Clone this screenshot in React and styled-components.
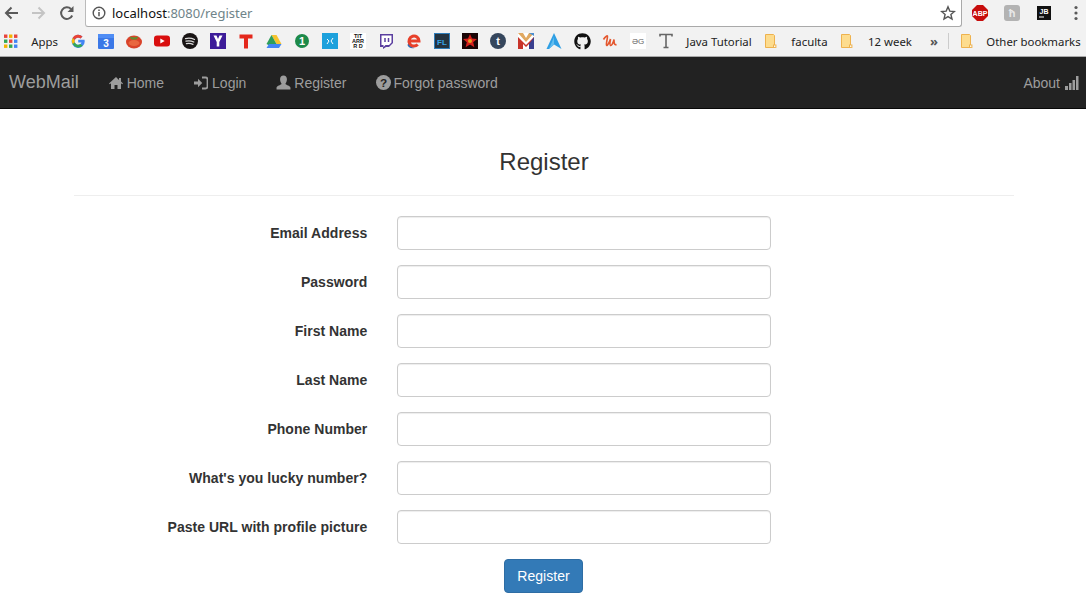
import React from 'react';
import styled, { createGlobalStyle } from 'styled-components';
import { FaGithub } from 'react-icons/fa';

const GlobalStyle = createGlobalStyle`
  html, body {
    margin: 0;
    height: 100%;
    overflow: hidden;
    background: #fff;
    font-family: "Liberation Sans", Arial, sans-serif;
    font-size: 14px;
    color: #333;
  }
  * { box-sizing: border-box; }
`;

const Chrome = styled.div`
  height: 57px;
  background: #f2f2f2;
  border-bottom: 1px solid #a9a9a9;
`;

const TopRow = styled.div`
  height: 27px;
  display: flex;
`;

const NavButtons = styled.div`
  width: 85px;
  flex: none;
  display: flex;
  gap: 6px;
`;

const ToolButton = styled.div`
  width: ${p => p.$w || 22}px;
  height: 26px;
  flex: none;
  display: flex;
  align-items: center;
  justify-content: center;
`;

const UrlBox = styled.div`
  width: 877px;
  height: 27px;
  flex: none;
  background: #fff;
  border: 1px solid #a9a9a9;
  border-top: 0;
  border-left-color: #bbb;
  border-radius: 0 0 3px 3px;
  display: flex;
  align-items: center;
  padding: 0 5px 1px 6px;
`;

const Url = styled.div`
  flex: 1;
  margin-left: 6px;
  font: 13px "Noto Sans", sans-serif;
  color: #111;
  span { color: #6f8489; }
`;

const Extensions = styled.div`
  flex: 1;
  display: flex;
  gap: 16px;
  padding-left: 10px;
`;

const BookmarkRow = styled.div`
  height: 29px;
  display: flex;
  align-items: center;
  padding: 0 0 1px 3px;
`;

const Bookmark = styled.div`
  width: ${p => p.$w}px;
  flex: none;
  display: flex;
  align-items: center;
  justify-content: center;
  padding-left: ${p => p.$pad || 0}px;
  font: 11.4px "Noto Sans", sans-serif;
  color: #222;
  white-space: nowrap;
`;

const More = styled(Bookmark)`
  color: #555;
  font-size: 13px;
  font-weight: 700;
`;

const Divider = styled.div`
  width: 1px;
  height: 16px;
  background: #ccc;
  flex: none;
  margin: 0 8px 0 1px;
`;

const Navbar = styled.nav`
  height: 52px;
  background: #222;
  border-bottom: 1px solid #080808;
  display: flex;
  align-items: center;
  padding: 0 7px 0 9px;
  color: #9d9d9d;
`;

const Brand = styled.a`
  font-size: 18px;
  margin-right: 30px;
`;

const NavLinks = styled.div`
  flex: 1;
  display: flex;
  gap: 30px;
`;

const NavLink = styled.a`
  display: flex;
  align-items: center;
  gap: ${p => p.$gap}px;
  white-space: nowrap;
`;

const Container = styled.main`
  width: 970px;
  margin-left: 59px;
  padding: 0 15px;
`;

const Header = styled.header`
  height: 87px;
  border-bottom: 1px solid #eee;
  margin-bottom: 20px;
  padding-top: 39px;
  text-align: center;
  font-size: 24px;
  line-height: 27px;
`;

const Form = styled.form`
  margin: 0 -15px;
`;

const Row = styled.div`
  display: grid;
  grid-template-columns: 33.3333% 41.6667%;
  margin-bottom: 15px;
`;

const Label = styled.label`
  padding: 7px 15px 0;
  text-align: right;
  font-weight: bold;
  line-height: 20px;
  letter-spacing: .03px;
`;

const Field = styled.div`
  padding: 0 15px;
`;

const Input = styled.input`
  display: block;
  width: 100%;
  height: 34px;
  background: #fff;
  border: 1px solid #ccc;
  border-radius: 4px;
  box-shadow: inset 0 1px 1px rgba(0, 0, 0, .075);
`;

const Actions = styled.div`
  text-align: center;
  padding-right: 1px;
`;

const Submit = styled.button`
  height: 34px;
  width: 79px;
  padding: 6px 0;
  background: #337ab7;
  border: 1px solid #2e6da4;
  border-radius: 4px;
  color: #fff;
  font: 14px "Liberation Sans", Arial, sans-serif;
  letter-spacing: .03px;
`;

const Svg = ({ size = 16, w, h, vb, children }) => (
  <svg width={w || size} height={h || size} viewBox={vb || '0 0 16 16'}>{children}</svg>
);

const Txt = ({ x = 8, y = 11.5, s = 9, c = '#fff', children }) => (
  <text x={x} y={y} fontSize={s} fill={c} fontWeight="bold" textAnchor="middle" fontFamily="Liberation Sans">{children}</text>
);

const AppsGrid = () => (
  <Svg>
    {[['#e8453c', '#f4b400', '#e8453c'], ['#34a853', '#e8453c', '#4285f4'], ['#f4b400', '#34a853', '#4285f4']].map((r, j) =>
      r.map((c, i) => <rect key={`${i}${j}`} x={1 + i * 5} y={1.5 + j * 5} width="3.4" height="3.4" fill={c} />))}
  </Svg>
);

const Folder = () => (
  <Svg>
    <path d="M2.500 1.500h8l1 1v12h-9z" fill="#fddc8e" stroke="#eeb24e" />
    <rect x="10.500" y="12" width="2.400" height="2.400" fill="#fff" stroke="#eeb24e" />
  </Svg>
);

const favicons = [
  <Svg><path d="M14.500 6.700H8.200v2.800h3.300a3.600 3.600 0 1 1-1-4l2-2A6.500 6.500 0 1 0 14.700 8z" fill="#4285f4" /><path d="M2.500 5a6.500 6.500 0 0 1 10-1.500l-2 2A3.600 3.600 0 0 0 4.800 7z" fill="#ea4335" /><path d="M2.500 11l2.300-1.700a3.600 3.600 0 0 0 5.700 1.700l2.200 1.800A6.500 6.500 0 0 1 2.500 11z" fill="#34a853" /><path d="M2.500 5l2.300 2a3.600 3.600 0 0 0 0 2.300L2.500 11a6.500 6.500 0 0 1 0-6z" fill="#fbbc05" /></Svg>,
  <Svg><rect y="1" width="16" height="15" rx="1" fill="#3b78e7" /><rect y="1" width="16" height="4" fill="#4f8df5" /><Txt y={13.500} s={10}>3</Txt></Svg>,
  <Svg><ellipse cx="8" cy="9" rx="8" ry="6.500" fill="#d9432a" /><ellipse cx="8" cy="10" rx="5.500" ry="3" fill="#e9673f" /><path d="M3.500 3.500L8 4.500l4.500-1L10.500 6.500h-5z" fill="#5d8f31" /></Svg>,
  <Svg><rect y="2.500" width="16" height="11" rx="3" fill="#d90f0f" /><path d="M6.300 5.500v5l4.400-2.500z" fill="#fff" /></Svg>,
  <Svg><circle cx="8" cy="8" r="8" fill="#191414" /><path d="M3.500 5.600c3-.8 6-.6 9 .9M4 8.200c2.600-.6 5.200-.4 7.800.8M4.500 10.600c2.200-.5 4.400-.3 6.500.7" stroke="#ddd" strokeWidth="1.300" fill="none" strokeLinecap="round" /></Svg>,
  <Svg><rect width="16" height="16" fill="#3d1c99" /><path d="M3.500 2.500h3L8 6l1.500-3.500h3L9.300 9v4.500H6.700V9z" fill="#fff" /></Svg>,
  <Svg><path d="M1.500 1.500h13v4H10v10H6v-10H1.500z" fill="#e4281c" /></Svg>,
  <Svg><path d="M5.500 2h5l5 9h-5z" fill="#f7c32e" /><path d="M5.500 2l5 9-2.500 4-7.500-4z" fill="#2f9e5a" /><path d="M3 11h12.500l-2.500 4H.5z" fill="#4285f4" /></Svg>,
  <Svg><circle cx="8" cy="8" r="7" fill="#1d8a4a" /><path d="M6 15l1-3h3z" fill="#1d8a4a" /><Txt y={11.800} s={11}>1</Txt></Svg>,
  <Svg><rect width="16" height="16" fill="#1da1dc" /><path d="M5 6l2 2-2 3M11 5L9 8l2 3" stroke="#fff" fill="none" strokeWidth="1" /></Svg>,
  <Svg><rect width="16" height="16" fill="#fff" /><Txt y={5} s={5.500} c="#111">TIT</Txt><Txt y={10} s={5.500} c="#111">ARR</Txt><Txt y={15} s={5.500} c="#111">R D</Txt></Svg>,
  <Svg><path d="M2 1h13v9l-4 4H8l-3 2v-2H2z" fill="#5a3e9f" /><path d="M3.500 2.500h10v7l-2.500 2.500H7.500L5.500 14v-2h-2z" fill="#fff" /><path d="M7 5v4M10.500 5v4" stroke="#5a3e9f" strokeWidth="1.500" /></Svg>,
  <Svg><path d="M1.500 12C2 14.500 5 15.800 8.500 15 5 14.500 3.500 12 3 9z" fill="#2c6cb5" /><path d="M3.800 8h9.200a5 5 0 1 0-1.300 3.400" fill="none" stroke="#e8402a" strokeWidth="3" /></Svg>,
  <Svg><rect x=".5" y=".5" width="15" height="15" fill="#24333f" stroke="#2e7cb8" /><Txt y={11.500} s={8} c="#35a4e8">FL</Txt></Svg>,
  <Svg><rect width="16" height="16" fill="#1a0505" /><path d="M8 1l2 4.600 5 .4-3.800 3.300 1.200 5L8 11.600 3.600 14.300l1.200-5L1 6l5-.4z" fill="#d8201c" /><circle cx="8" cy="8" r="2" fill="#e8a020" /></Svg>,
  <Svg><circle cx="8" cy="8" r="8" fill="#35465c" /><Txt y={12} s={11}>t</Txt></Svg>,
  <Svg><rect width="16" height="16" fill="#fff" /><path d="M0 0h5l3 5 3-5h5L8 9z" fill="#e0a860" /><path d="M11 0h5v3z" fill="#4c8fd0" /><path d="M0 4l8 8 8-8v12h-5V11l-3 3-3-3v5H0z" fill="#c8342a" /><path d="M11 11l5-7v12h-5z" fill="#3a3f8f" /></Svg>,
  <Svg><path d="M8 0l7.500 16L8 11.500 3 16H.5z" fill="#2f9fe4" /><path d="M8 4L3 16 8 11.500z" fill="#62bdf0" /></Svg>,
  <FaGithub size={17} color="#111" />,
  <Svg><path d="M1.500 6.500C3 4 5 2.500 5.500 3S4 10 4.500 12s3-3 4-6c-.5 3-1 6 0 6.500s3-3 3.500-6c0 3 .3 6 2.500 5" fill="none" stroke="#e4572e" strokeWidth="1.600" /></Svg>,
  <Svg><rect width="16" height="16" fill="#fff" /><text x="8" y="11" fontSize="8" fill="#666" textAnchor="middle" fontFamily="Liberation Sans">ƏG</text></Svg>,
  <Svg><path d="M2 3.500V1.500h12v2M8 1.500v13M5.500 14.500h5" fill="none" stroke="#666" strokeWidth="1.600" /></Svg>,
];

const fields = [
  'Email Address',
  'Password',
  'First Name',
  'Last Name',
  'Phone Number',
  "What's you lucky number?",
  'Paste URL with profile picture',
];

export default function App() {
  return (
    <>
      <GlobalStyle />
      <Chrome>
        <TopRow>
          <NavButtons>
            <ToolButton>
              <Svg><path d="M15 8H3M8.500 2.500L3 8l5.500 5.500" fill="none" stroke="#5a5a5a" strokeWidth="2" /></Svg>
            </ToolButton>
            <ToolButton>
              <Svg><path d="M1 8h12M7.500 2.500L13 8l-5.500 5.500" fill="none" stroke="#c4c4c4" strokeWidth="2" /></Svg>
            </ToolButton>
            <ToolButton>
              <Svg><path d="M13.200 10.500A5.800 5.800 0 1 1 12 4" fill="none" stroke="#5a5a5a" strokeWidth="2" /><path d="M14.500 1v6h-6z" fill="#5a5a5a" /></Svg>
            </ToolButton>
          </NavButtons>
          <UrlBox>
            <Svg size={14} vb="0 0 14 14">
              <circle cx="7" cy="7" r="5.800" fill="none" stroke="#555" strokeWidth="1.400" />
              <path d="M7 6v4.200M7 3.600v1.500" stroke="#555" strokeWidth="1.500" />
            </Svg>
            <Url>localhost<span>:8080/register</span></Url>
            <Svg>
              <path d="M8 1.800l1.800 4.300 4.600.4-3.500 3 1.100 4.500L8 11.600 4 14l1.100-4.500-3.500-3 4.600-.4z" fill="none" stroke="#555" strokeWidth="1.400" />
            </Svg>
          </UrlBox>
          <Extensions>
            <ToolButton $w={16}>
              <Svg>
                <path d="M5 0h6l5 5v6l-5 5H5l-5-5V5z" fill="#c70d0c" />
                <Txt y={10.800} s={7}>ABP</Txt>
              </Svg>
            </ToolButton>
            <ToolButton $w={16}>
              <Svg><rect width="16" height="16" rx="3" fill="#b3b3b3" /><Txt y={12} s={11} c="#e8e8e8">ћ</Txt></Svg>
            </ToolButton>
            <ToolButton $w={16}>
              <Svg>
                <rect width="14" height="14" x="1" y="1" fill="#111" />
                <Txt y={8.500} s={7}>JB</Txt>
                <rect x="3" y="11.500" width="5" height="1" fill="#fff" />
              </Svg>
            </ToolButton>
            <ToolButton $w={16}>
              <Svg size={4} h={16} vb="0 0 4 16">
                <circle cx="2" cy="2.500" r="1.600" fill="#5a5a5a" />
                <circle cx="2" cy="8" r="1.600" fill="#5a5a5a" />
                <circle cx="2" cy="13.500" r="1.600" fill="#5a5a5a" />
              </Svg>
            </ToolButton>
          </Extensions>
        </TopRow>
        <BookmarkRow>
          <Bookmark $w={16}><AppsGrid /></Bookmark>
          <Bookmark $w={45} $pad={6}>Apps</Bookmark>
          {favicons.map((icon, i) => <Bookmark key={i} $w={28}>{icon}</Bookmark>)}
          <Bookmark $w={78}>Java Tutorial</Bookmark>
          <Bookmark $w={26}><Folder /></Bookmark>
          <Bookmark $w={51}>faculta</Bookmark>
          <Bookmark $w={24}><Folder /></Bookmark>
          <Bookmark $w={62}>12 week</Bookmark>
          <More $w={26}>»</More>
          <Divider />
          <Bookmark $w={19}><Folder /></Bookmark>
          <Bookmark $w={115}>Other bookmarks</Bookmark>
        </BookmarkRow>
      </Chrome>
      <Navbar>
        <Brand>WebMail</Brand>
        <NavLinks>
          <NavLink $gap={4}>
            <Svg size={14} vb="0 0 14 14"><path d="M7 1L0 7.500l.8.800L2 7.300V13h3.500V9h3v4H12V7.300l1.200 1 .8-.800-2-1.900V2h-2v2z" fill="#9d9d9d" /></Svg>
            Home
          </NavLink>
          <NavLink $gap={4}>
            <Svg size={14} vb="0 0 14 14"><path d="M0 5.500h4V2.800L8.200 7 4 11.200V8.500H0z" fill="#9d9d9d" /><path d="M8 1.500h3.500A2 2 0 0 1 13.500 3.500v7a2 2 0 0 1-2 2H8" fill="none" stroke="#9d9d9d" strokeWidth="1.800" /></Svg>
            Login
          </NavLink>
          <NavLink $gap={3}>
            <Svg size={15} vb="0 0 14 14"><path d="M7 0.500c2 0 3.200 1.500 3.200 3.500S9.300 7.500 8.800 8.200c0 1 4.700 1.800 4.700 3.800v1.500H.5V12c0-2 4.700-2.800 4.700-3.800C4.700 7.500 3.800 6 3.800 4S5 .5 7 .5z" fill="#9d9d9d" /></Svg>
            Register
          </NavLink>
          <NavLink $gap={2}>
            <Svg size={15} vb="0 0 14 14">
              <circle cx="7" cy="7" r="7" fill="#9d9d9d" />
              <text x="7" y="11" fontSize="11" fontWeight="bold" fill="#222" textAnchor="middle" fontFamily="Liberation Sans">?</text>
            </Svg>
            Forgot password
          </NavLink>
        </NavLinks>
        <NavLink $gap={5}>
          About
          <Svg size={14} vb="0 0 14 14">
            <rect x="0" y="10" width="3" height="4" fill="#9d9d9d" />
            <rect x="4" y="7" width="2.500" height="7" fill="#9d9d9d" />
            <rect x="7.500" y="4" width="2.500" height="10" fill="#9d9d9d" />
            <rect x="11" y="0" width="2.500" height="14" fill="#9d9d9d" />
          </Svg>
        </NavLink>
      </Navbar>
      <Container>
        <Header>Register</Header>
        <Form onSubmit={e => e.preventDefault()}>
          {fields.map(name => (
            <Row key={name}>
              <Label>{name}</Label>
              <Field><Input type="text" aria-label={name} /></Field>
            </Row>
          ))}
          <Actions><Submit type="submit">Register</Submit></Actions>
        </Form>
      </Container>
    </>
  );
}
